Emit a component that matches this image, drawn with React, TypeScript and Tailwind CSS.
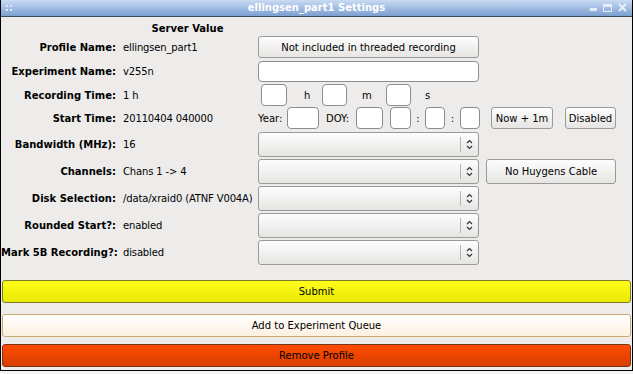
import React from "react";

const F = { fontFamily: '"DejaVu Sans", sans-serif' };

function Btn({ children, className = "" }: { children?: React.ReactNode; className?: string }) {
  return (
    <div
      className={
        "flex items-center justify-center rounded-[3px] border border-[#9b9a98] bg-gradient-to-b from-[#fdfdfd] to-[#e6e5e3] text-[10px] text-black " +
        className
      }
    >
      {children}
    </div>
  );
}

function Box({ className = "" }: { className?: string }) {
  return <div className={"rounded-[4px] border border-[#8e8d8b] bg-white " + className} />;
}

function Select() {
  return (
    <div className="flex h-[25px] w-[221px] items-center rounded-[3px] border border-[#9b9a98] bg-gradient-to-b from-[#fdfdfd] to-[#e6e5e3]">
      <div className="flex-1" />
      <div className="h-[15px] w-px bg-[#b5b4b2]" />
      <div className="flex w-[17px] justify-center">
        <svg width="7" height="11" viewBox="0 0 7 11">
          <path d="M1 4 L3.5 1.5 L6 4" fill="none" stroke="#333" strokeWidth="1.2" />
          <path d="M1 7 L3.5 9.5 L6 7" fill="none" stroke="#333" strokeWidth="1.2" />
        </svg>
      </div>
    </div>
  );
}

function Row({
  label,
  value,
  h,
  children,
}: {
  label: string;
  value: string;
  h: string;
  children?: React.ReactNode;
}) {
  return (
    <div className={"flex items-center " + h}>
      <div className="w-[115px] shrink-0 whitespace-nowrap text-right text-[10px] font-bold text-black">{label}</div>
      <div className="w-[142px] shrink-0 whitespace-nowrap pl-[7px] text-[10px] tracking-[-0.15px] text-black">{value}</div>
      <div className="flex items-center">{children}</div>
    </div>
  );
}

export default function App() {
  return (
    <div className="h-[374px] w-[633px] bg-[#f4f4f4]" style={F}>
      <div className="flex h-[371px] w-[633px] flex-col border-x border-b border-black bg-[#edeceb]">
        {/* title bar */}
        <div className="relative flex h-[17px] shrink-0 items-center justify-center border-b border-[#3c4a5c] bg-gradient-to-b from-[#c9dbf2] to-[#7c9fd2]">
          <div className="absolute left-[5px] top-[5px] grid grid-cols-2 gap-[2px]">
            <div className="h-[2px] w-[2px] bg-[#dde8f6]" />
            <div className="h-[2px] w-[2px] bg-[#dde8f6]" />
            <div className="h-[2px] w-[2px] bg-[#dde8f6]" />
            <div className="h-[2px] w-[2px] bg-[#dde8f6]" />
          </div>
          <span className="text-[10px] font-bold leading-none text-white">ellingsen_part1 Settings</span>
          <div className="absolute right-[5px] top-[3px] flex items-end gap-[6px]">
            <div className="mb-[1px] h-[3px] w-[7px] bg-[#e6eef9]" />
            <div className="h-[8px] w-[9px] border border-t-[3px] border-[#e6eef9]" />
            <svg width="9" height="9" viewBox="0 0 9 9">
              <path d="M1 1 L8 8 M8 1 L1 8" stroke="#e6eef9" strokeWidth="2" />
            </svg>
          </div>
        </div>

        <div className="flex flex-col">
          {/* header */}
          <div className="flex h-[19px] items-center pt-[3px]">
            <div className="w-[116px]" />
            <div className="w-[141px] text-center text-[10px] font-bold text-black">Server Value</div>
          </div>

          <Row label="Profile Name:" value="ellingsen_part1" h="h-[22px]">
            <Btn className="h-[22px] w-[221px]">Not included in threaded recording</Btn>
          </Row>
          <div className="h-[3px]" />
          <Row label="Experiment Name:" value="v255n" h="h-[21px]">
            <Box className="h-[21px] w-[221px]" />
          </Row>
          <div className="h-[2px]" />
          <Row label="Recording Time:" value="1 h" h="h-[22px]">
            <Box className="ml-[3px] h-[22px] w-[26px]" />
            <span className="ml-[17px] w-[18px] text-[10px]">h</span>
            <Box className="h-[22px] w-[25px]" />
            <span className="ml-[15px] w-[24px] text-[10px]">m</span>
            <Box className="h-[22px] w-[25px]" />
            <span className="ml-[14px] text-[10px]">s</span>
          </Row>
          <div className="h-[1px]" />
          <Row label="Start Time:" value="20110404 040000" h="h-[22px]">
            <span className="w-[29px] text-[10px]">Year:</span>
            <Box className="h-[22px] w-[32px]" />
            <span className="ml-[7px] w-[30px] text-[10px]">DOY:</span>
            <Box className="h-[22px] w-[27px]" />
            <Box className="ml-[7px] h-[22px] w-[21px]" />
            <span className="w-[14px] text-center text-[10px]">:</span>
            <Box className="h-[22px] w-[20px]" />
            <span className="w-[15px] text-center text-[10px]">:</span>
            <Box className="h-[22px] w-[20px]" />
            <Btn className="ml-[11px] h-[22px] w-[62px]">Now + 1m</Btn>
            <Btn className="ml-[12px] h-[22px] w-[51px]">Disabled</Btn>
          </Row>
          <div className="h-[3px]" />
          <div className="flex flex-col gap-[2px]">
            <Row label="Bandwidth (MHz):" value="16" h="h-[25px]">
              <Select />
            </Row>
            <Row label="Channels:" value="Chans 1 -> 4" h="h-[25px]">
              <Select />
              <Btn className="ml-[7px] h-[25px] w-[130px]">No Huygens Cable</Btn>
            </Row>
            <Row label="Disk Selection:" value="/data/xraid0 (ATNF V004A)" h="h-[25px]">
              <Select />
            </Row>
            <Row label="Rounded Start?:" value="enabled" h="h-[25px]">
              <Select />
            </Row>
            <Row label="Mark 5B Recording?:" value="disabled" h="h-[25px]">
              <Select />
            </Row>
          </div>
        </div>

        <div className="mt-[15px] flex flex-col px-px">
          <div className="flex h-[23px] items-center justify-center rounded-[3px] border border-[#7f7a2a] bg-gradient-to-b from-[#ffff1a] to-[#e8e800] text-[10px] text-black">
            Submit
          </div>
          <div className="mt-[11px] flex h-[23px] items-center justify-center rounded-[3px] border border-[#c9a972] bg-gradient-to-b from-[#ffffff] to-[#fdf1e0] text-[10px] text-black">
            Add to Experiment Queue
          </div>
          <div className="mt-[7px] flex h-[23px] items-center justify-center rounded-[3px] border border-[#7a3418] bg-gradient-to-b from-[#ff4c00] to-[#d83e00] text-[10px] text-black">
            Remove Profile
          </div>
        </div>
      </div>
    </div>
  );
}
